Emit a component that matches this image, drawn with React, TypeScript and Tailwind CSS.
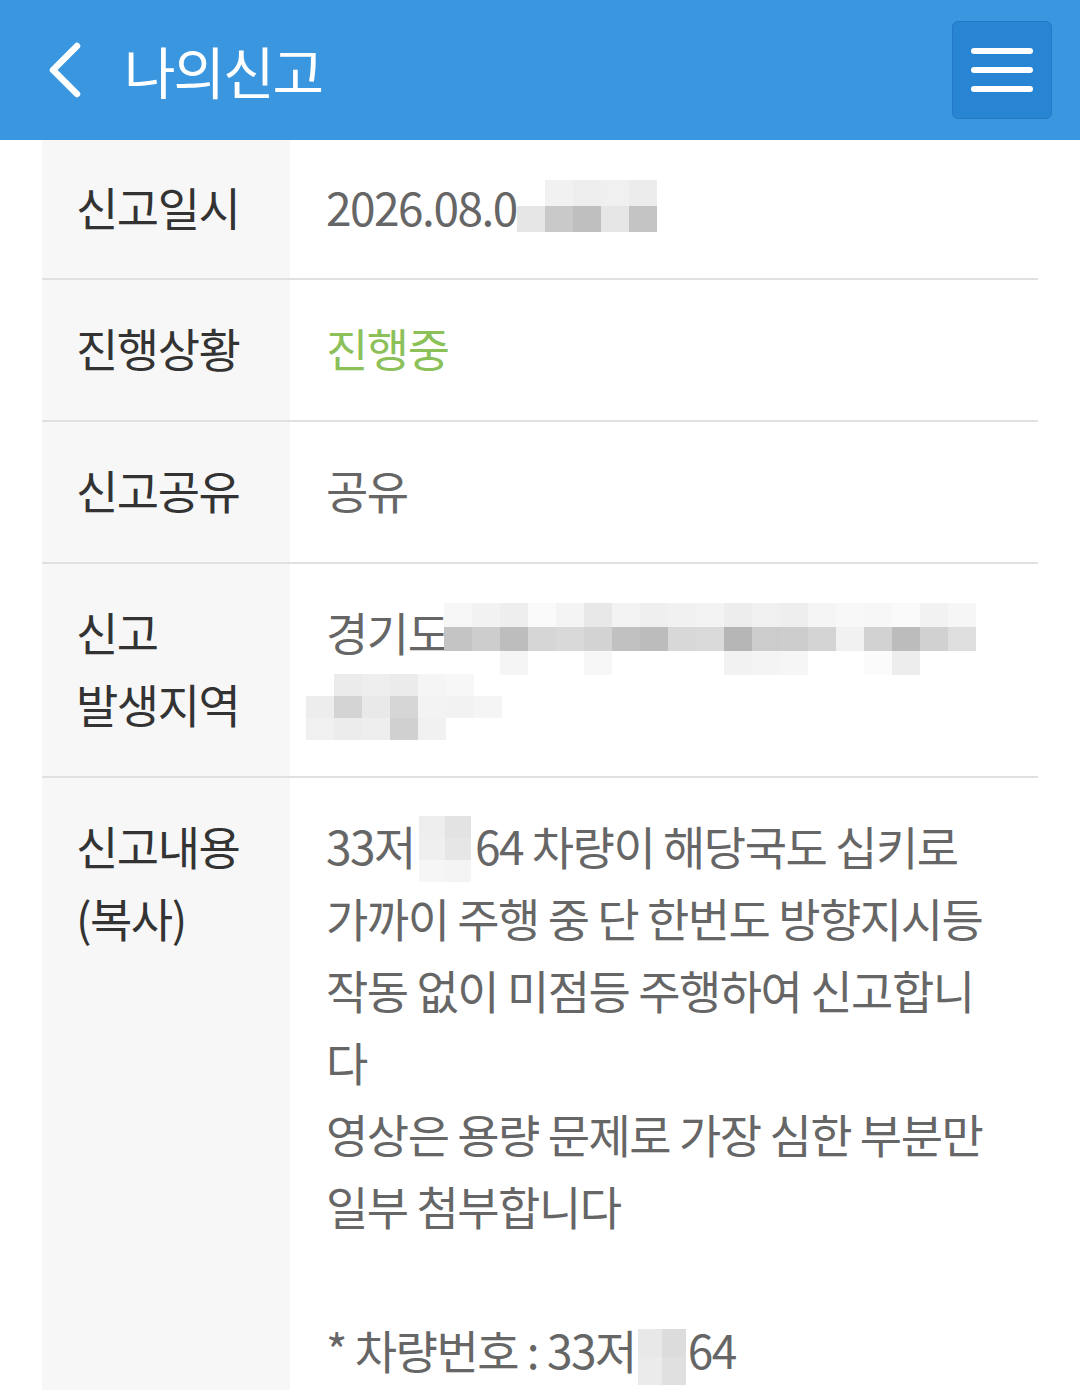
import { Fragment } from 'react'

const font = { fontFamily: '"Noto Sans CJK KR", "Noto Sans", sans-serif' }

// 모자이크 처리된 부분 (개인정보 가림)
function Mosaic({ rows, className, tile = 'h-[26px] w-[28px]' }: { rows: string[][]; className?: string; tile?: string }) {
  return (
    <span className={`inline-flex flex-col align-middle ${className ?? ''}`}>
      {rows.map((row, i) => (
        <span key={i} className="flex">
          {row.map((c, j) => (
            <span key={j} className={tile} style={{ backgroundColor: c }} />
          ))}
        </span>
      ))}
    </span>
  )
}

const dateRows = [
  ['#ffffff', '#f1f1f1', '#eeeeee', '#f0f0f0', '#ececec'],
  ['#e6e6e6', '#c9c9c9', '#bfbfbf', '#e6e6e6', '#c4c4c4'],
]

const addrRows = [
  ['#f7f7f7', '#f2f2f2', '#eeeeee', '#fafafa', '#f4f4f4', '#e8e8e8', '#f3f3f3', '#efefef', '#f1f1f1', '#f3f3f3', '#ededed', '#f0f0f0', '#eeeeee', '#f5f5f5', '#f8f8f8', '#f7f7f7', '#fafafa', '#f2f2f2', '#f6f6f6'],
  ['#c4c4c4', '#cdcdcd', '#bdbdbd', '#d6d6d6', '#d9d9d9', '#d3d3d3', '#c1c1c1', '#bcbcbc', '#d8d8d8', '#dadada', '#b6b6b6', '#cccccc', '#cdcdcd', '#d4d4d4', '#f1f1f1', '#d2d2d2', '#bcbcbc', '#d1d1d1', '#dedede'],
  ['#ffffff', '#ffffff', '#f5f5f5', '#ffffff', '#ffffff', '#f7f7f7', '#ffffff', '#ffffff', '#ffffff', '#ffffff', '#f2f2f2', '#f4f4f4', '#f6f6f6', '#ffffff', '#ffffff', '#fbfbfb', '#ededed', '#ffffff', '#ffffff'],
]

const addrRows2 = [
  ['#ffffff', '#ebebeb', '#eeeeee', '#ebebeb', '#f5f5f5', '#f7f7f7', '#ffffff'],
  ['#ededed', '#d4d4d4', '#e9e9e9', '#d6d6d6', '#f3f3f3', '#f2f2f2', '#f5f5f5'],
  ['#f0f0f0', '#ececec', '#eeeeee', '#d0d0d0', '#f1f1f1', '#ffffff', '#ffffff'],
]

const plateRows = [['#eeeeee', '#e3e3e3'], ['#efefef', '#e6e6e6'], ['#f6f6f6', '#f4f4f4']]
const plateRows2 = [['#e8e8e8', '#dcdcdc'], ['#ebebeb', '#e0e0e0']]

function Row({ label, children, last, first }: { label: React.ReactNode; children: React.ReactNode; last?: boolean; first?: boolean }) {
  const py = first ? 'pt-[30px] pb-[36px]' : 'pt-[31px] pb-[37px]'
  return (
    <div className={`flex ${last ? '' : 'border-b-2 border-[#e0e0e0]'}`}>
      <div className={`w-[248px] shrink-0 bg-[#f7f7f7] pl-[34px] pr-4 text-[#333333] ${py}`}>{label}</div>
      <div className={`flex-1 px-9 text-[#666666] ${py}`}>{children}</div>
    </div>
  )
}

export default function App() {
  const content = [
    <>
      33저
      <Mosaic rows={plateRows} tile="h-[22px] w-[26px]" className="mx-1 -mt-2" />
      64 차량이 해당국도 십키로
    </>,
    '가까이 주행 중 단 한번도 방향지시등',
    '작동 없이 미점등 주행하여 신고합니',
    '다',
    '영상은 용량 문제로 가장 심한 부분만',
    '일부 첨부합니다',
    '\u00a0',
    <>
      * 차량번호 : 33저
      <Mosaic rows={plateRows2} tile="h-[28px] w-[24px]" className="mx-0.5" />
      64
    </>,
  ]

  return (
    <div className="min-h-screen bg-white text-[46px] leading-[72px] tracking-[-1.5px]" style={font}>
      <header className="flex h-[140px] items-center bg-[#3a97df] pl-[44px] pr-[28px]">
        <svg width="40" height="60" viewBox="0 0 40 60" className="shrink-0">
          <path d="M33 6 L9 30 L33 54" fill="none" stroke="white" strokeWidth="6.5" strokeLinecap="round" strokeLinejoin="round" />
        </svg>
        <h1 className="ml-[40px] text-[56px] leading-none tracking-[-2px] text-white">나의신고</h1>
        <button
          type="button"
          className="ml-auto flex h-[98px] w-[100px] flex-col items-center justify-center gap-[13px] rounded-[6px] border border-[#2479c4] bg-[#2785d3]"
        >
          <span className="h-[6px] w-[62px] rounded-full bg-white" />
          <span className="h-[6px] w-[62px] rounded-full bg-white" />
          <span className="h-[6px] w-[62px] rounded-full bg-white" />
        </button>
      </header>

      <div className="mx-[42px]">
        <Row first label="신고일시">
          <div className="h-[72px] whitespace-nowrap">
            2026.08.0
            <Mosaic rows={dateRows} className="-mt-4" />
          </div>
        </Row>
        <Row label="진행상황">
          <span className="text-[#8cc15a]">진행중</span>
        </Row>
        <Row label="신고공유">공유</Row>
        <Row
          label={
            <>
              신고
              <br />
              발생지역
            </>
          }
        >
          <div className="h-[72px] whitespace-nowrap">
            경기도
            <Mosaic rows={addrRows} tile="h-[24px] w-[28px]" className="-ml-1" />
          </div>
          <div className="-ml-5 h-[72px] whitespace-nowrap">
            <Mosaic rows={addrRows2} tile="h-[22px] w-[28px]" className="-mt-2" />
          </div>
        </Row>
        <Row
          last
          label={
            <>
              신고내용
              <br />
              (복사)
            </>
          }
        >
          {content.map((line, i) => (
            <Fragment key={i}>
              <div className="h-[72px] whitespace-nowrap">{line}</div>
            </Fragment>
          ))}
        </Row>
      </div>
    </div>
  )
}
